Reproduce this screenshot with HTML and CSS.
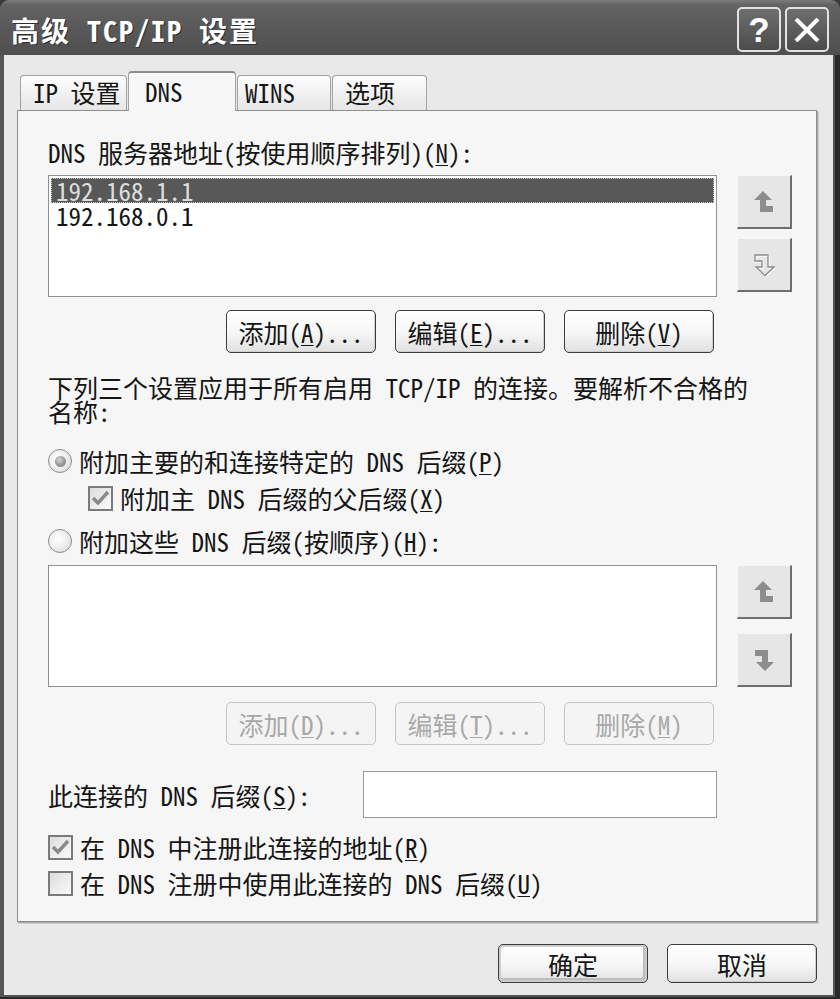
FILE: index.html
```html
<!DOCTYPE html>
<html lang="zh-CN">
<head>
<meta charset="utf-8">
<title>高级 TCP/IP 设置</title>
<link rel="stylesheet" href="styles.css">
</head>
<body>
<div class="window">
  <div class="titlebar">
    <span class="title">高级 TCP/IP 设置</span>
    <div class="caption-btns">
      <span class="cap-btn help">?</span>
      <span class="cap-btn close"><svg width="28" height="24" viewBox="0 0 28 24"><path d="M3 1 L25 23 M25 1 L3 23" stroke="#fff" stroke-width="4" fill="none"/></svg></span>
    </div>
  </div>
  <div class="client">
    <div class="tabs">
      <div class="tab t1">IP 设置</div>
      <div class="tab t2 active">DNS</div>
      <div class="tab t3">WINS</div>
      <div class="tab t4">选项</div>
    </div>
    <div class="panel">
      <div class="label-top">DNS 服务器地址(按使用顺序排列)(<u>N</u>):</div>
      <div class="list-row">
        <div class="listbox">
          <div class="item sel">192.168.1.1</div>
          <div class="item">192.168.0.1</div>
        </div>
        <div class="side">
          <span class="arrow-btn"><svg width="22" height="24" viewBox="0 0 22 24"><path d="M10 1 L19 10 L13 10 L13 16 L20 16 L20 22 L7 22 L7 10 L1 10 Z" fill="#8d8d8d"/></svg></span>
          <span class="arrow-btn"><svg width="22" height="24" viewBox="0 0 22 24"><path d="M13 23.5 L4 15 L10 15 L10 9 L3 9 L3 3 L16 3 L16 15 L22 15 Z" fill="none" stroke="#ffffff" stroke-width="1.3"/><path d="M12 22.5 L3 14 L9 14 L9 8 L2 8 L2 2 L15 2 L15 14 L21 14 Z" fill="none" stroke="#8a8a8a" stroke-width="1.3"/></svg></span>
        </div>
      </div>
      <div class="btn-row">
        <button class="btn">添加(<u>A</u>)...</button>
        <button class="btn">编辑(<u>E</u>)...</button>
        <button class="btn">删除(<u>V</u>)</button>
      </div>
      <p class="note">下列三个设置应用于所有启用 TCP/IP 的连接。要解析不合格的<br>名称:</p>
      <div class="option opt1"><span class="radio checked"></span>附加主要的和连接特定的 DNS 后缀(<u>P</u>)</div>
      <div class="option sub"><span class="check"><svg width="19" height="17" viewBox="0 0 19 17"><path d="M2 8 L7 13 L17 2" fill="none" stroke="#8a8a8a" stroke-width="3.4"/></svg></span>附加主 DNS 后缀的父后缀(<u>X</u>)</div>
      <div class="option opt2"><span class="radio"></span>附加这些 DNS 后缀(按顺序)(<u>H</u>):</div>
      <div class="list-row row2">
        <div class="listbox"></div>
        <div class="side spread">
          <span class="arrow-btn"><svg width="22" height="24" viewBox="0 0 22 24"><path d="M10 1 L19 10 L13 10 L13 16 L20 16 L20 22 L7 22 L7 10 L1 10 Z" fill="#8d8d8d"/></svg></span>
          <span class="arrow-btn"><svg width="22" height="24" viewBox="0 0 22 24"><path d="M12 23 L3 14 L9 14 L9 8 L2 8 L2 2 L15 2 L15 14 L21 14 Z" fill="#8d8d8d"/></svg></span>
        </div>
      </div>
      <div class="btn-row row2">
        <button class="btn" disabled>添加(<u>D</u>)...</button>
        <button class="btn" disabled>编辑(<u>T</u>)...</button>
        <button class="btn" disabled>删除(<u>M</u>)</button>
      </div>
      <div class="suffix-row">
        <span>此连接的 DNS 后缀(<u>S</u>):</span>
        <span class="textbox"></span>
      </div>
      <div class="option chk2"><span class="check"><svg width="19" height="17" viewBox="0 0 19 17"><path d="M2 8 L7 13 L17 2" fill="none" stroke="#8a8a8a" stroke-width="3.4"/></svg></span>在 DNS 中注册此连接的地址(<u>R</u>)</div>
      <div class="option chk3"><span class="check"></span>在 DNS 注册中使用此连接的 DNS 后缀(<u>U</u>)</div>
    </div>
    <div class="footer">
      <button class="btn small default">确定</button>
      <button class="btn small">取消</button>
    </div>
  </div>
</div>
</body>
</html>
```

FILE: styles.css
```css
* { box-sizing: border-box; }
html, body { margin: 0; padding: 0; }
body {
  width: 840px;
  height: 999px;
  overflow: hidden;
  background: #3a3a3a;
  font-family: "Noto Sans Mono CJK SC", "Noto Sans CJK SC", sans-serif;
  font-size: 25px;
  color: #151515;
}
.window {
  width: 840px;
  height: 999px;
  display: flex;
  flex-direction: column;
  background: #555555;
  border-radius: 9px 9px 0 0;
  overflow: hidden;
  box-shadow: inset -5px 0 0 #2a2a2a, inset 0 -2px 0 #2a2a2a;
}
.titlebar {
  height: 55px;
  flex: none;
  display: flex;
  align-items: center;
  padding: 4px 11px 0 11px;
  background: linear-gradient(#7c7c7c 0, #636363 5px, #5a5a5a 45%, #4f4f4f 100%);
}
.title {
  flex: 1;
  color: #ffffff;
  font-size: 28px;
  font-weight: 700;
  letter-spacing: 2px;
  text-shadow: 1px 1px 0 #2f2f2f;
  white-space: nowrap;
}
.caption-btns { display: flex; gap: 4px; }
.cap-btn {
  width: 44px;
  height: 45px;
  border: 2px solid #e2e2e2;
  border-radius: 5px;
  background: linear-gradient(#6e6e6e, #4c4c4c);
  display: flex;
  align-items: center;
  justify-content: center;
  color: #ffffff;
}
.cap-btn.help {
  font-family: "Liberation Sans", sans-serif;
  font-weight: 700;
  font-size: 35px;
  line-height: 1;
}
.client {
  flex: 1;
  margin: 0 7px 4px 4px;
  background: #e9e9e9;
  padding: 16px 16px 12px 13px;
  display: flex;
  flex-direction: column;
}
.tabs {
  display: flex;
  align-items: flex-end;
  gap: 1px;
  padding-left: 3px;
  height: 40px;
  margin-bottom: -1px;
  position: relative;
  z-index: 1;
}
.tab {
  height: 35px;
  margin-bottom: 1px;
  border: 1px solid #a2a2a2;
  border-bottom: none;
  border-radius: 4px 4px 0 0;
  background: linear-gradient(#fdfdfd, #e6e6e6);
  line-height: 33px;
  padding-left: 12px;
  white-space: nowrap;
}
.tab.active {
  height: 40px;
  margin-bottom: 0;
  background: #f7f7f7;
  border-top: 2px solid #8c8c8c;
  line-height: 36px;
}
.t1 { width: 107px; }
.t2 { width: 108px; padding-left: 16px; }
.t3 { width: 94px; padding-left: 7px; }
.t4 { width: 95px; }
.panel {
  border: 1px solid #8e8e8e;
  background: #f6f6f6;
  box-shadow: 1px 1px 0 #a6a6a6, 2px 2px 0 #cdcdcd;
  padding: 0 24px 23px 30px;
}
.label-top {
  margin-top: 28px;
  line-height: 26px;
  white-space: nowrap;
}
.list-row {
  display: flex;
  gap: 20px;
  margin-top: 10px;
  height: 122px;
}
.list-row.row2 { margin-top: 9px; }
.listbox {
  flex: 1;
  background: #ffffff;
  border: 1px solid #8f8f8f;
  padding: 2px;
}
.item {
  height: 25px;
  line-height: 25px;
  padding-left: 5px;
  white-space: nowrap;
}
.item.sel {
  background: #585858;
  color: #dedede;
  outline: 1px dotted #c8c8c8;
  outline-offset: -1px;
}
.side {
  width: 55px;
  display: flex;
  flex-direction: column;
  gap: 9px;
}
.side.spread { justify-content: space-between; }
.arrow-btn {
  height: 54px;
  display: flex;
  align-items: center;
  justify-content: center;
  background: #e6e6e6;
  border-top: 1px solid #f6f6f6;
  border-left: 1px solid #f6f6f6;
  border-right: 2px solid #6e6e6e;
  border-bottom: 2px solid #6e6e6e;
}
.btn-row {
  display: flex;
  justify-content: flex-end;
  gap: 19px;
  margin-top: 13px;
  margin-right: 78px;
}
.btn-row.row2 { margin-top: 15px; }
.btn {
  width: 150px;
  height: 43px;
  padding: 0;
  border: 1px solid #3c3c3c;
  border-radius: 5px;
  background: linear-gradient(#ffffff 0%, #f6f6f6 55%, #e0e0e0 100%);
  box-shadow: inset -1px -1px 0 #cfcfcf;
  font: inherit;
  color: #151515;
  white-space: nowrap;
}
.btn:disabled {
  border-color: #c6c6c6;
  background: #f4f4f4;
  box-shadow: none;
  color: #a8a8a8;
}
.btn.small { height: 39px; }
.btn.default { box-shadow: inset 0 0 0 2px #cdcdcd, inset -2px -2px 0 2px #bdbdbd; }
u { text-underline-offset: 2px; text-decoration-thickness: 1px; }
.note {
  margin: 22px 0 0 0;
  line-height: 24px;
  white-space: nowrap;
}
.option {
  display: flex;
  align-items: center;
  height: 30px;
  white-space: nowrap;
}
.opt1 { margin-top: 23px; }
.sub { margin-top: 7px; padding-left: 40px; }
.opt2 { margin-top: 13px; }
.chk2 { margin-top: 14px; }
.chk3 { margin-top: 6px; }
.radio {
  flex: none;
  width: 24px;
  height: 24px;
  margin-right: 7px;
  border-radius: 50%;
  border: 1px solid #8c8c8c;
  background: radial-gradient(circle at 40% 40%, #ffffff 0, #f0f0f0 45%, #d2d2d2 100%);
  display: flex;
  align-items: center;
  justify-content: center;
}
.radio.checked::after {
  content: "";
  width: 11px;
  height: 11px;
  border-radius: 50%;
  background: radial-gradient(circle at 40% 35%, #d6d6d6 0, #9a9a9a 50%, #7e7e7e 100%);
}
.check {
  flex: none;
  width: 25px;
  height: 25px;
  margin-right: 7px;
  border: 2px solid #7a7a7a;
  background: linear-gradient(135deg, #dcdcdc, #fbfbfb);
  display: flex;
  align-items: center;
  justify-content: center;
}
.suffix-row {
  display: flex;
  align-items: center;
  justify-content: space-between;
  margin-top: 26px;
  margin-right: 75px;
  white-space: nowrap;
}
.textbox {
  width: 354px;
  height: 47px;
  border: 1px solid #9a9a9a;
  background: #ffffff;
}
.footer {
  display: flex;
  justify-content: flex-end;
  gap: 19px;
  margin-top: 22px;
}
```
